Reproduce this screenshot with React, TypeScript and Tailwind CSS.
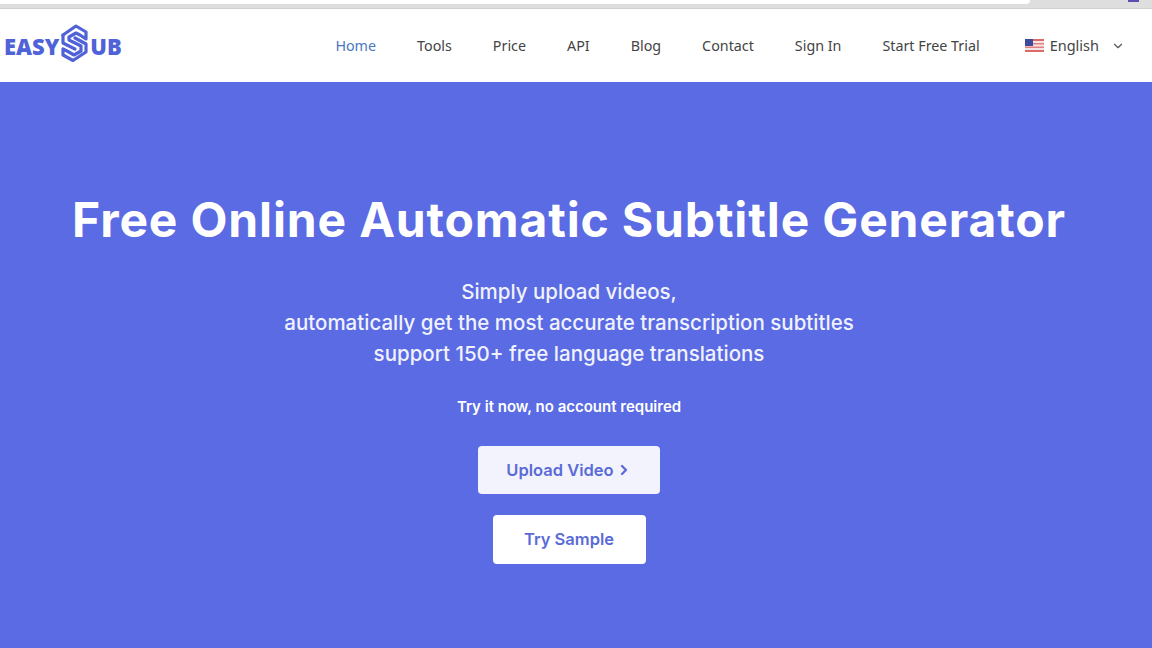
import { ChevronDown, ChevronRight } from "lucide-react";

const navItems = ["Home", "Tools", "Price", "API", "Blog", "Contact", "Sign In", "Start Free Trial"];

const Logo = () => (
  <div className="flex items-center text-[#4f62d8] font-['Open_Sans',sans-serif] font-extrabold text-[22px] leading-none">
    <span>EASY</span>
    <svg viewBox="0 0 27 38" className="w-[27px] h-[38px] -mt-[6px] ml-[2px] mr-[2px]" fill="none" stroke="#4f62d8" strokeWidth="3.2" strokeLinejoin="round" strokeLinecap="round">
      <path d="M2 11 L15 2 L25 8 L25 15 L19 11 L15 9 L8 13 L8 16 L20 22 L20 27 L13 31 L6 27 L2 25 L2 31 L12 36.5 L25 28 L25 20 L14 14" />
      <path d="M2 11 L2 19 L14 25" />
    </svg>
    <span>UB</span>
  </div>
);

const UsFlag = () => (
  <svg viewBox="0 0 19 13" className="w-[19px] h-[13px]">
    <rect width="19" height="13" fill="#f4e4e4" />
    <rect y="0" width="19" height="2" fill="#dc6a6a" />
    <rect y="4" width="19" height="1.5" fill="#e58080" />
    <rect y="7.5" width="19" height="1.5" fill="#e58080" />
    <rect y="11" width="19" height="2" fill="#dc6a6a" />
    <rect width="8" height="7" fill="#3b4a9c" />
  </svg>
);

export default function App() {
  return (
    <div className="w-[1152px] h-[648px] overflow-hidden flex flex-col bg-[#5a6be3] font-['Noto_Sans',sans-serif]">
      {/* browser strip */}
      <div className="h-[9px] shrink-0 bg-[#dedede] border-b border-[#cfcfcf] flex items-start">
        <div className="h-[4px] w-[1030px] bg-white rounded-br-[6px]" />
        <div className="h-[2px] w-[11px] ml-[98px] bg-[#5a4fb0]" />
      </div>

      {/* Header */}
      <header className="h-[73px] shrink-0 bg-white flex items-center justify-between pl-[4px] pr-[27px]">
        <Logo />
        <nav className="flex items-center gap-[41px] text-[14.3px] text-[#444]">
          {navItems.map((item) => (
            <a key={item} className={item === "Home" ? "text-[#4a78c0]" : ""}>
              {item}
            </a>
          ))}
          <div className="flex items-center ml-[4px]">
            <UsFlag />
            <span className="ml-[6px] text-[14.5px]">English</span>
            <ChevronDown className="w-[14px] h-[14px] ml-[12px] text-[#555]" />
          </div>
        </nav>
      </header>

      {/* Hero */}
      <main className="flex-1 flex flex-col items-center pr-[14px] text-white font-['Inter',sans-serif]">
        <h1 className="mt-[108px] text-[48px] leading-[60px] font-bold tracking-[0.85px] whitespace-nowrap">Free Online Automatic Subtitle Generator</h1>
        <div className="mt-[26px] text-[20.5px] leading-[31px] font-medium text-center text-[#f0f2fd]">
          <p>Simply upload videos,</p>
          <p>automatically get the most accurate transcription subtitles</p>
          <p>support 150+ free language translations</p>
        </div>
        <p className="mt-[27px] text-[15px] leading-[22px] font-semibold">Try it now, no account required</p>
        <button className="mt-[28px] w-[182px] h-[48px] rounded-[4px] bg-[#f2f3fd] text-[#5a6bd8] text-[16.5px] font-semibold flex items-center justify-center">
          Upload Video
          <ChevronRight className="w-[16px] h-[16px] ml-[2px]" strokeWidth={3.5} />
        </button>
        <button className="mt-[21px] w-[153px] h-[49px] rounded-[4px] bg-white text-[#5a6bd8] text-[16.5px] font-semibold">
          Try Sample
        </button>
      </main>
    </div>
  );
}
